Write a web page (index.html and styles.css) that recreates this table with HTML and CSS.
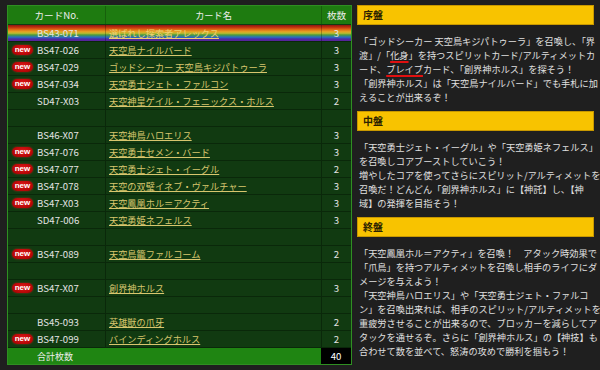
FILE: index.html
```html
<!DOCTYPE html>
<html lang="ja">
<head>
<meta charset="utf-8">
<title>デッキリスト</title>
<link rel="stylesheet" href="styles.css">
</head>
<body>
<div class="page">
  <div class="list">
    <div class="row head"><div class="cell no">カードNo.</div><div class="cell name">カード名</div><div class="cell qty">枚数</div></div>
    <div class="row rainbow"><div class="cell no"><span class="slot"></span>BS43-071</div><div class="cell name"><a>選ばれし探索者アレックス</a></div><div class="cell qty">3</div></div>
    <div class="row"><div class="cell no"><span class="slot badge">new</span>BS47-026</div><div class="cell name"><a>天空鳥ナイルバード</a></div><div class="cell qty">3</div></div>
    <div class="row"><div class="cell no"><span class="slot badge">new</span>BS47-029</div><div class="cell name"><a>ゴッドシーカー 天空鳥キジパトゥーラ</a></div><div class="cell qty">3</div></div>
    <div class="row"><div class="cell no"><span class="slot badge">new</span>BS47-034</div><div class="cell name"><a>天空勇士ジェト・ファルコン</a></div><div class="cell qty">3</div></div>
    <div class="row"><div class="cell no"><span class="slot"></span>SD47-X03</div><div class="cell name"><a>天空神皇ゲイル・フェニックス・ホルス</a></div><div class="cell qty">2</div></div>
    <div class="row"><div class="cell no"></div><div class="cell name"></div><div class="cell qty"></div></div>
    <div class="row"><div class="cell no"><span class="slot"></span>BS46-X07</div><div class="cell name"><a>天空神鳥ハロエリス</a></div><div class="cell qty">3</div></div>
    <div class="row"><div class="cell no"><span class="slot badge">new</span>BS47-076</div><div class="cell name"><a>天空勇士セメン・バード</a></div><div class="cell qty">3</div></div>
    <div class="row"><div class="cell no"><span class="slot badge">new</span>BS47-077</div><div class="cell name"><a>天空勇士ジェト・イーグル</a></div><div class="cell qty">2</div></div>
    <div class="row"><div class="cell no"><span class="slot badge">new</span>BS47-078</div><div class="cell name"><a>天空の双璧イネブ・ヴァルチャー</a></div><div class="cell qty">3</div></div>
    <div class="row"><div class="cell no"><span class="slot badge">new</span>BS47-X03</div><div class="cell name"><a>天空鳳凰ホル＝アクティ</a></div><div class="cell qty">3</div></div>
    <div class="row"><div class="cell no"><span class="slot"></span>SD47-006</div><div class="cell name"><a>天空勇姫ネフェルス</a></div><div class="cell qty">3</div></div>
    <div class="row"><div class="cell no"></div><div class="cell name"></div><div class="cell qty"></div></div>
    <div class="row"><div class="cell no"><span class="slot badge">new</span>BS47-089</div><div class="cell name"><a>天空鳥籠ファルコーム</a></div><div class="cell qty">2</div></div>
    <div class="row"><div class="cell no"></div><div class="cell name"></div><div class="cell qty"></div></div>
    <div class="row"><div class="cell no"><span class="slot badge">new</span>BS47-X07</div><div class="cell name"><a>創界神ホルス</a></div><div class="cell qty">3</div></div>
    <div class="row"><div class="cell no"></div><div class="cell name"></div><div class="cell qty"></div></div>
    <div class="row"><div class="cell no"><span class="slot"></span>BS45-093</div><div class="cell name"><a>英雄獣の爪牙</a></div><div class="cell qty">2</div></div>
    <div class="row"><div class="cell no"><span class="slot badge">new</span>BS47-099</div><div class="cell name"><a>バインディングホルス</a></div><div class="cell qty">2</div></div>
    <div class="row total"><div class="cell sum"><span class="slot"></span>合計枚数</div><div class="cell qty all">40</div></div>
  </div>

  <div class="guide">
    <h3>序盤</h3>
    <p>「ゴッドシーカー 天空鳥キジパトゥーラ」を召喚し、「界<br>渡」/「<span class="mark">化身</span>」を持つスピリットカード/アルティメットカ<br>ード、<span class="mark">ブレイブ</span>カード、「創界神ホルス」を探そう！<br>「創界神ホルス」は「天空鳥ナイルバード」でも手札に加<br>えることが出来るぞ！</p>
    <h3>中盤</h3>
    <p>「天空勇士ジェト・イーグル」や「天空勇姫ネフェルス」<br>を召喚しコアブーストしていこう！<br>増やしたコアを使ってさらにスピリット/アルティメットを<br>召喚だ！どんどん「創界神ホルス」に【神託】し、【神<br>域】の発揮を目指そう！</p>
    <h3>終盤</h3>
    <p>「天空鳳凰ホル＝アクティ」を召喚！　アタック時効果で<br>「爪鳥」を持つアルティメットを召喚し相手のライフにダ<br>メージを与えよう！<br>「天空神鳥ハロエリス」や「天空勇士ジェト・ファルコ<br>ン」を召喚出来れば、相手のスピリット/アルティメットを<br>重疲労させることが出来るので、ブロッカーを減らしてア<br>タックを通せるぞ。さらに「創界神ホルス」の【神技】も<br>合わせて数を並べて、怒涛の攻めで勝利を掴もう！</p>
  </div>
</div>
</body>
</html>
```

FILE: styles.css
```css
html, body {
  margin: 0;
  background: #1f1f1f;
}
body {
  font-family: "Noto Sans CJK JP", "Noto Sans", sans-serif;
  overflow: hidden;
}
.page {
  display: flex;
  align-items: flex-start;
  gap: 5px;
  padding: 5px 0 0 7px;
}

/* deck list */
.list {
  width: 345px;
  flex: none;
  box-sizing: border-box;
  border: 1px solid #2f8f22;
  background: #113a11;
  color: #e4e4e4;
  font-size: 9px;
}
.row {
  display: grid;
  grid-template-columns: 97px 216px 1fr;
  height: 17px;
  box-sizing: border-box;
  border-top: 1px solid #0a280a;
}
.cell {
  display: flex;
  align-items: center;
  min-width: 0;
  white-space: nowrap;
  overflow: hidden;
}
.no {
  padding-left: 4px;
  font-size: 9.6px;
}
.name {
  padding-left: 3px;
  border-left: 1px solid #0a280a;
  font-size: 9.2px;
}
.name a {
  color: #d8c66e;
  text-decoration: underline;
  text-underline-offset: 1px;
}
.qty {
  justify-content: center;
  border-left: 1px solid #0a280a;
  font-size: 9.6px;
}
.head {
  height: 18px;
  border-top: 0;
  background: #1e7b10;
  color: #eee;
}
.head .no, .head .name {
  justify-content: center;
  padding-left: 0;
}
.head .name, .head .qty {
  border-left-color: #17600c;
}
.slot {
  display: inline-block;
  width: 21px;
  height: 10px;
  margin-right: 4px;
  flex: none;
}
.badge {
  box-sizing: border-box;
  background: radial-gradient(ellipse at 50% 40%, #e01818 0%, #b40606 70%, #8a0404 100%);
  border-radius: 5px;
  color: #fff;
  font-family: "Liberation Sans", Arial, sans-serif;
  font-size: 8px;
  font-weight: bold;
  line-height: 10px;
  text-align: center;
  box-shadow: 0 0 2px rgba(255, 40, 40, 0.6);
}
.rainbow {
  border-top-color: #113a11;
  background: linear-gradient(to bottom,
    #8c1610 0%, #c0300e 14%, #df6a14 28%, #e6a524 42%,
    #b9b830 52%, #4c9c3a 62%, #2a6fc0 76%, #4a2aa6 88%, #5a2496 100%);
}
.rainbow .name, .rainbow .qty {
  border-left-color: rgba(0, 0, 0, 0.25);
}
.rainbow .name a {
  color: #f0d070;
}
.total {
  grid-template-columns: 313px 1fr;
  height: 17px;
  background: #1f8512;
  color: #eee;
}
.sum {
  padding-left: 4px;
}
.all {
  background: #000;
  border-left: 0;
  color: #fff;
}

/* guide */
.guide {
  width: 237px;
  flex: none;
  color: #e0e0e0;
  font-size: 9.2px;
  line-height: 14px;
}
.guide h3 {
  margin: 0 0 9px;
  height: 20px;
  box-sizing: border-box;
  padding-left: 5px;
  background: #f8c300;
  border: 1px solid #c89800;
  color: #2a2200;
  font-size: 10px;
  font-weight: bold;
  line-height: 18px;
}
.guide p {
  margin: 0 0 7px;
  padding-left: 2px;
  white-space: nowrap;
}
.mark {
  text-decoration: underline;
  text-decoration-color: #e01010;
  text-decoration-thickness: 2px;
  text-underline-offset: 2px;
}
```
